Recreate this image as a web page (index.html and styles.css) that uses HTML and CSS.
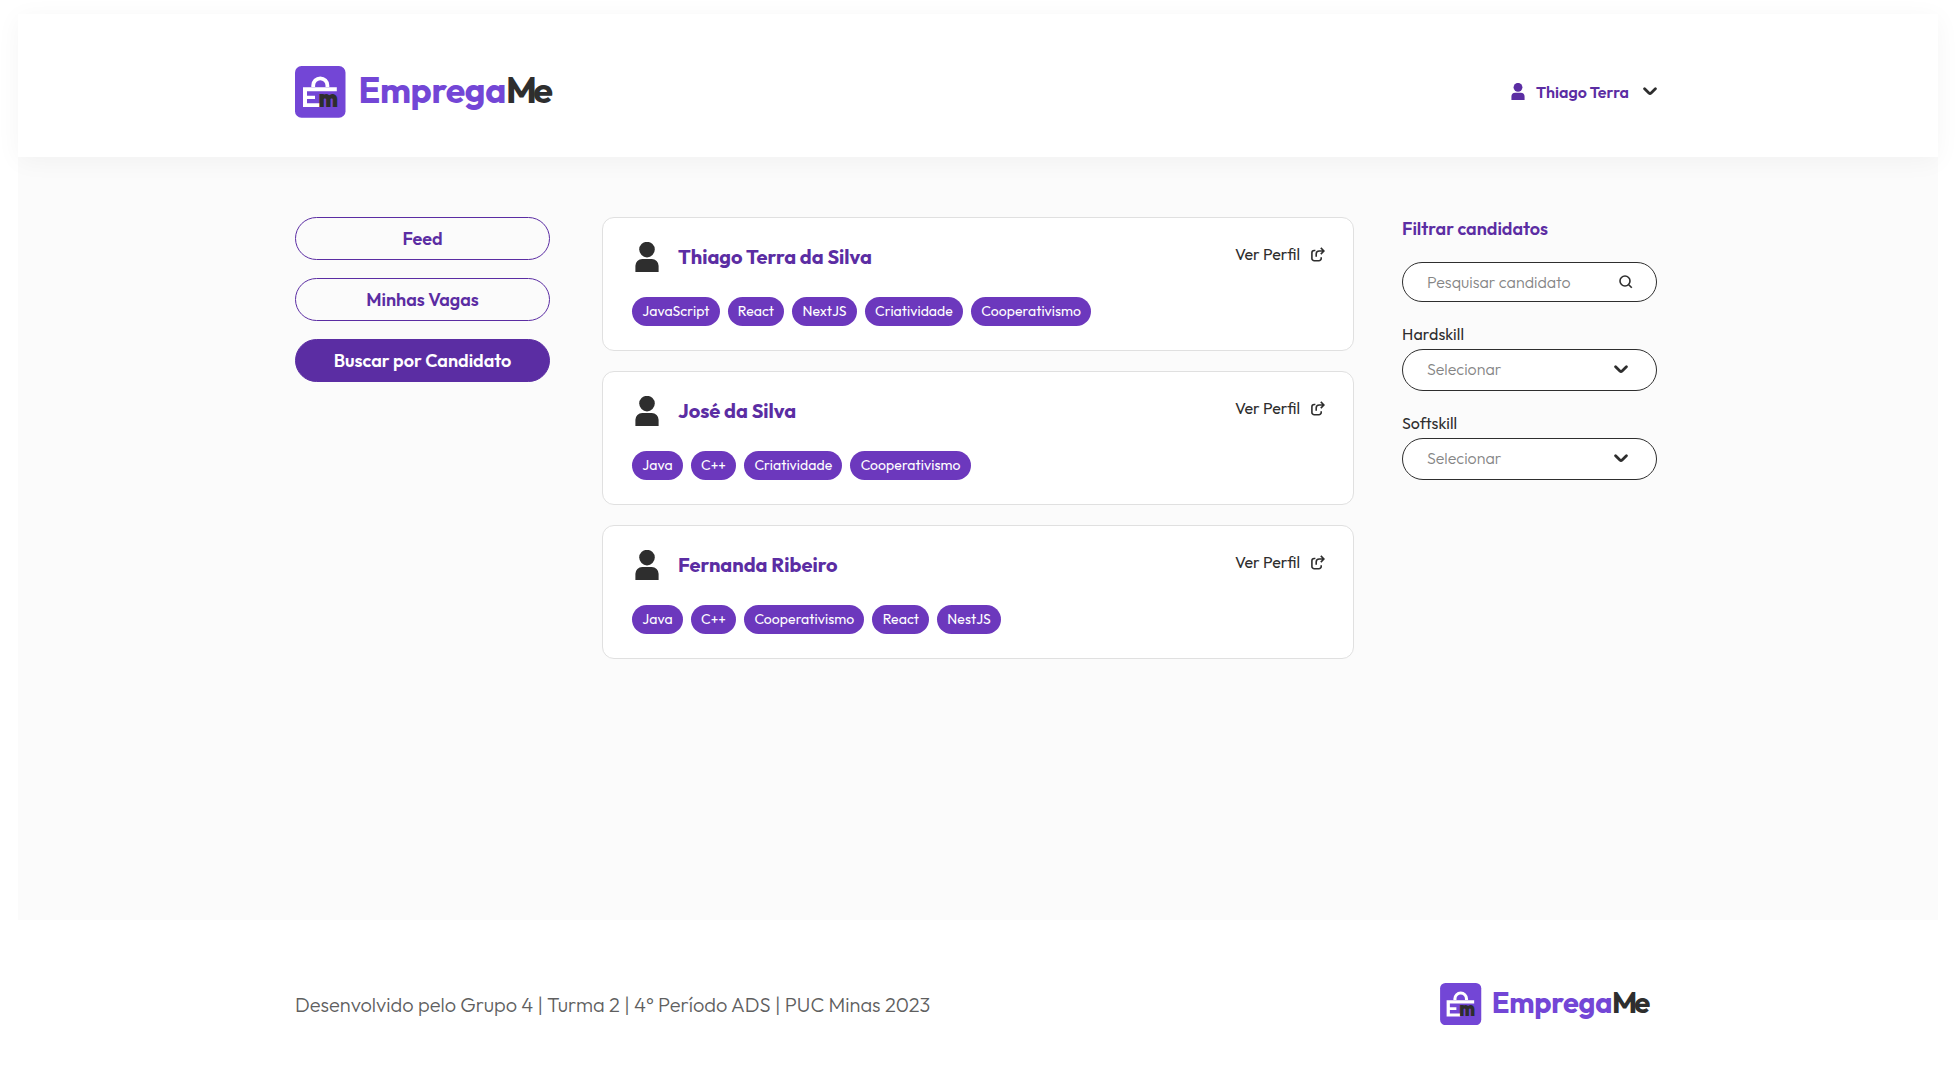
FILE: index.html
```
<!DOCTYPE html>
<html lang="pt-BR">
<head>
<meta charset="utf-8">
<title>EmpregaMe</title>
<link rel="stylesheet" href="styles.css">
</head>
<body>
<svg class="defs" aria-hidden="true">
  <symbol id="logo" viewBox="0 0 258 52">
    <rect width="50.5" height="51.7" rx="6.5" fill="#7346d6"/>
    <path d="M18.2 21v-1.6a7.1 7.1 0 0 1 14.2 0V21" fill="none" stroke="#fff" stroke-width="3.8"/>
    <path d="M8 21.3h33.8v4H12v4.4h8V33h-8v4.3h12.6V41H8z" fill="#fff"/>
    <text class="logo-type" x="23.5" y="41" font-size="26" font-weight="900" textLength="19.5" lengthAdjust="spacingAndGlyphs" fill="#2e2e2e">m</text>
    <text class="logo-type" x="63.4" y="36.7" font-size="35.5" font-weight="700" textLength="148" fill="#7346d6">Emprega</text>
    <text class="logo-type" x="211" y="36.7" font-size="36" font-weight="700" letter-spacing="-3.6" fill="#2e2e2e">Me</text>
  </symbol>
  <symbol id="person" viewBox="0 0 24 30">
    <circle cx="12" cy="7.6" r="7.8"/>
    <path d="M.4 30v-6.2A6.8 6.8 0 0 1 7.2 17h9.6a6.8 6.8 0 0 1 6.8 6.8V30z"/>
  </symbol>
  <symbol id="chevron" viewBox="0 0 14 9">
    <path d="M1.6 1.8 5.9 6Q7 7 8.1 6l4.3-4.2" fill="none" stroke="#2e2e2e" stroke-width="2.8" stroke-linecap="round"/>
  </symbol>
  <symbol id="share" viewBox="0 0 14 15">
    <path d="M4.4 3.5H3.2A2.3 2.3 0 0 0 .9 5.8v5.6a2.3 2.3 0 0 0 2.3 2.3h4.7a2.3 2.3 0 0 0 2.3-2.3v-1.2M5.2 9.8V7a3 3 0 0 1 3-3h4.6M9.8.9 12.9 4 9.8 7.1" fill="none" stroke="#2e2e2e" stroke-width="1.6"/>
  </symbol>
  <symbol id="search" viewBox="0 0 14 14">
    <path d="M9.7 9.7 12.8 12.8" stroke="#2e2e2e" stroke-width="1.6"/>
    <circle cx="6" cy="6" r="5" fill="none" stroke="#2e2e2e" stroke-width="1.6"/>
  </symbol>
</svg>
<div class="page">
  <header class="header">
    <svg class="logo"><use href="#logo"/></svg>
    <div class="user">
      <svg class="user-icon"><use href="#person"/></svg>
      <span class="user-name">Thiago Terra</span>
      <svg class="chevron"><use href="#chevron"/></svg>
    </div>
  </header>
  <main class="main">
    <nav class="menu">
      <a class="menu-item">Feed</a>
      <a class="menu-item">Minhas Vagas</a>
      <a class="menu-item active">Buscar por Candidato</a>
    </nav>
    <section class="list">
      <article class="card">
        <div class="card-head">
          <svg class="avatar"><use href="#person"/></svg>
          <h2 class="name">Thiago Terra da Silva</h2>
          <a class="profile">Ver Perfil <svg class="share"><use href="#share"/></svg></a>
        </div>
        <div class="chips"><span class="chip">JavaScript</span><span class="chip">React</span><span class="chip">NextJS</span><span class="chip">Criatividade</span><span class="chip">Cooperativismo</span></div>
      </article>
      <article class="card">
        <div class="card-head">
          <svg class="avatar"><use href="#person"/></svg>
          <h2 class="name">José da Silva</h2>
          <a class="profile">Ver Perfil <svg class="share"><use href="#share"/></svg></a>
        </div>
        <div class="chips"><span class="chip">Java</span><span class="chip">C++</span><span class="chip">Criatividade</span><span class="chip">Cooperativismo</span></div>
      </article>
      <article class="card">
        <div class="card-head">
          <svg class="avatar"><use href="#person"/></svg>
          <h2 class="name">Fernanda Ribeiro</h2>
          <a class="profile">Ver Perfil <svg class="share"><use href="#share"/></svg></a>
        </div>
        <div class="chips"><span class="chip">Java</span><span class="chip">C++</span><span class="chip">Cooperativismo</span><span class="chip">React</span><span class="chip">NestJS</span></div>
      </article>
    </section>
    <aside class="filters">
      <h3 class="filter-title">Filtrar candidatos</h3>
      <div class="field search"><span>Pesquisar candidato</span><svg class="search-icon"><use href="#search"/></svg></div>
      <div class="label">Hardskill</div>
      <div class="field select"><span>Selecionar</span><svg class="chevron"><use href="#chevron"/></svg></div>
      <div class="label">Softskill</div>
      <div class="field select"><span>Selecionar</span><svg class="chevron"><use href="#chevron"/></svg></div>
    </aside>
  </main>
  <footer class="footer">
    <p class="credits">Desenvolvido pelo Grupo 4 | Turma 2 | 4° Período ADS | PUC Minas 2023</p>
    <svg class="logo small"><use href="#logo"/></svg>
  </footer>
</div>
</body>
</html>
```
FILE: styles.css
```
* { box-sizing: border-box; }
body {
  margin: 0;
  background: #fff;
  color: #2e2e2e;
  font-family: Outfit, Inter, sans-serif;
  font-feature-settings: "cv11";
}
.defs { display: none; }
svg { display: block; flex: none; }
.page { width: 1920px; margin: 0 auto; padding-top: 14px; }
.header {
  position: relative;
  display: flex;
  justify-content: space-between;
  height: 143px;
  padding: 52px 281px 0 277px;
  background: #fff;
  box-shadow: 0 4px 24px rgba(0, 0, 0, .045);
}
.logo { width: 258px; height: 52px; }
.logo.small { width: 210.5px; height: 42.4px; }
.user { display: flex; align-items: center; height: 51px; }
.user-icon { width: 14px; height: 17px; fill: #5b2da3; }
.user-name { margin: 0 14px 0 11px; color: #5b2da3; font-size: 16px; font-weight: 600; white-space: nowrap; }
.chevron { width: 14px; height: 9px; }
.main {
  display: grid;
  grid-template-columns: 307px 800px 255px;
  align-items: start;
  height: 763px;
  padding: 60px 0 0 277px;
  background: #fbfbfb;
}
.menu { display: grid; gap: 18px; width: 255px; }
.list { display: grid; gap: 20px; width: 752px; }
.menu-item {
  height: 43px;
  border: 1px solid #5b2da3;
  border-radius: 22px;
  color: #5b2da3;
  font-size: 18px;
  font-weight: 600;
  line-height: 42px;
  text-align: center;
}
.menu-item.active { background: #5b2da3; color: #fff; }
.card { height: 134px; padding: 24px 28px 0 29px; border: 1px solid #e0e0e0; border-radius: 12px; background: #fff; }
.card-head { display: flex; align-items: flex-start; }
.avatar { width: 24px; height: 30px; margin-left: 3px; fill: #2e2e2e; }
.name { flex: 1; margin: 0 0 0 19px; color: #5b2da3; font-size: 20px; font-weight: 700; line-height: 30px; }
.profile { display: flex; align-items: center; gap: 11px; height: 24px; font-size: 16px; }
.share { width: 14px; height: 15px; }
.chips { display: flex; gap: 8px; margin-top: 25px; }
.chip { height: 29px; padding: 0 10.2px; border-radius: 15px; background: #6c38bd; color: #fff; font-size: 14px; line-height: 29px; letter-spacing: .07px; white-space: nowrap; }
.filter-title { margin: 0 0 22px; color: #5b2da3; font-size: 18px; font-weight: 600; line-height: 23px; }
.field { display: flex; align-items: center; justify-content: space-between; border: 1px solid #2e2e2e; border-radius: 21px; background: #fff; color: #858585; font-size: 16px; font-weight: 300; }
.search { height: 40px; padding: 0 23px 0 24px; margin-bottom: 22px; }
.search-icon { width: 14px; height: 14px; margin-bottom: 1px; }
.label { height: 25px; font-size: 16px; font-weight: 400; line-height: 21px; letter-spacing: .08px; }
.select { height: 42px; padding: 0 28px 2px 24px; margin-bottom: 22px; }
.footer { display: flex; justify-content: space-between; padding: 63px 287.5px 0 277px; }
.credits { margin: 0; color: #5f5f5f; font-size: 20px; font-weight: 300; line-height: 43px; white-space: nowrap; }
```
